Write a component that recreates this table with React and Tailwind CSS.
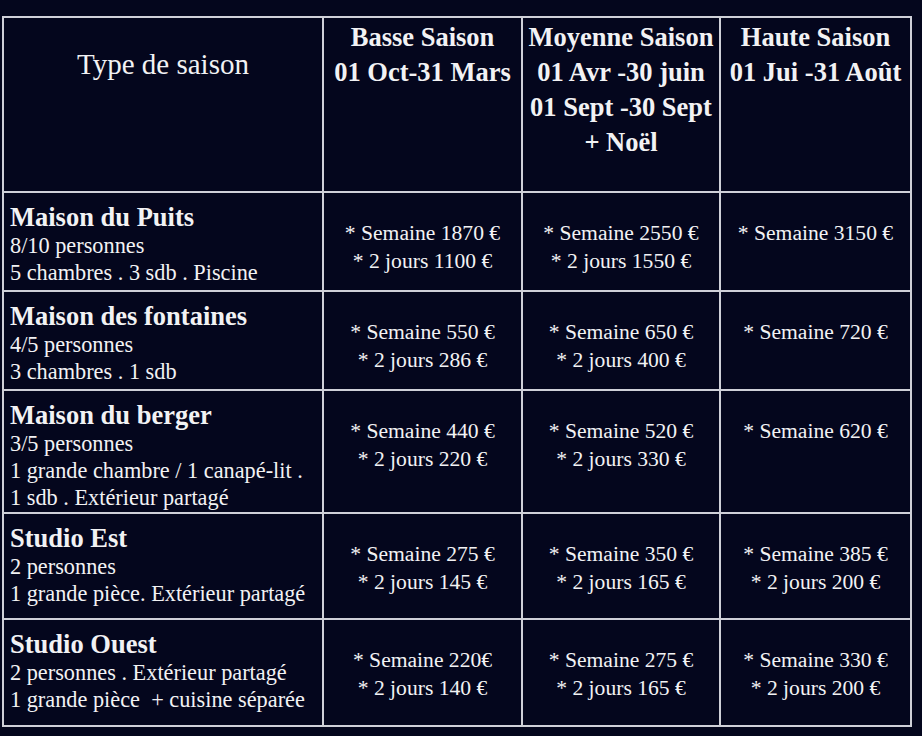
const seasons = [
  { lines: ["Basse Saison", "01 Oct-31 Mars"] },
  { lines: ["Moyenne Saison", "01 Avr -30 juin", "01 Sept -30 Sept", "+ Noël"] },
  { lines: ["Haute Saison", "01 Jui -31 Août"] },
];

const rows = [
  {
    name: "Maison du Puits",
    details: ["8/10 personnes", "5 chambres . 3 sdb . Piscine"],
    prices: [
      ["* Semaine 1870 €", "* 2 jours 1100 €"],
      ["* Semaine 2550 €", "* 2 jours 1550 €"],
      ["* Semaine 3150 €"],
    ],
  },
  {
    name: "Maison des fontaines",
    details: ["4/5 personnes", "3 chambres . 1 sdb"],
    prices: [
      ["* Semaine 550 €", "* 2 jours 286 €"],
      ["* Semaine 650 €", "* 2 jours 400 €"],
      ["* Semaine 720 €"],
    ],
  },
  {
    name: "Maison du berger",
    details: ["3/5 personnes", "1 grande chambre / 1 canapé-lit .", "1 sdb . Extérieur partagé"],
    prices: [
      ["* Semaine 440 €", "* 2 jours 220 €"],
      ["* Semaine 520 €", "* 2 jours 330 €"],
      ["* Semaine 620 €"],
    ],
  },
  {
    name: "Studio Est",
    details: ["2 personnes", "1 grande pièce. Extérieur partagé"],
    prices: [
      ["* Semaine 275 €", "* 2 jours 145 €"],
      ["* Semaine 350 €", "* 2 jours 165 €"],
      ["* Semaine 385 €", "* 2 jours 200 €"],
    ],
  },
  {
    name: "Studio Ouest",
    details: ["2 personnes . Extérieur partagé", "1 grande pièce  + cuisine séparée"],
    prices: [
      ["* Semaine 220€", "* 2 jours 140 €"],
      ["* Semaine 275 €", "* 2 jours 165 €"],
      ["* Semaine 330 €", "* 2 jours 200 €"],
    ],
  },
];

export default function App() {
  return (
    <div
      className="min-h-screen w-full bg-[#04061d] pl-[2px] pt-[16px] text-[#f2f2f4]"
      style={{ fontFamily: '"Liberation Serif", "DejaVu Serif", serif' }}
    >
      <div className="grid w-[910px] grid-cols-[318px_197px_196px_189px] grid-rows-[173px_97px_97px_121px_104px_105px] gap-[2px] bg-[#cfd0d8] p-[2px]">
        {/* header row */}
        <div className="bg-[#04061d] pt-[29px] text-center text-[29px] leading-[35px]">
          Type de saison
        </div>
        {seasons.map((s, i) => (
          <div key={i} className="bg-[#04061d] pt-[2px] text-center text-[26.5px] font-bold leading-[35px]">
            {s.lines.map((l) => (
              <div key={l} className="whitespace-nowrap">{l}</div>
            ))}
          </div>
        ))}

        {rows.map((r) => (
          <div key={r.name} className="contents">
            <div className="bg-[#04061d] pl-[6px] pt-[9px]">
              <div className="whitespace-nowrap text-[26.5px] font-bold leading-[30px]">{r.name}</div>
              {r.details.map((d) => (
                <div key={d} className="whitespace-pre text-[22.3px] leading-[27px]">{d}</div>
              ))}
            </div>
            {r.prices.map((p, i) => (
              <div key={i} className="bg-[#04061d] pt-[26px] text-center text-[21.6px] leading-[28px]">
                {p.map((l) => (
                  <div key={l}>{l}</div>
                ))}
              </div>
            ))}
          </div>
        ))}
      </div>
    </div>
  );
}
